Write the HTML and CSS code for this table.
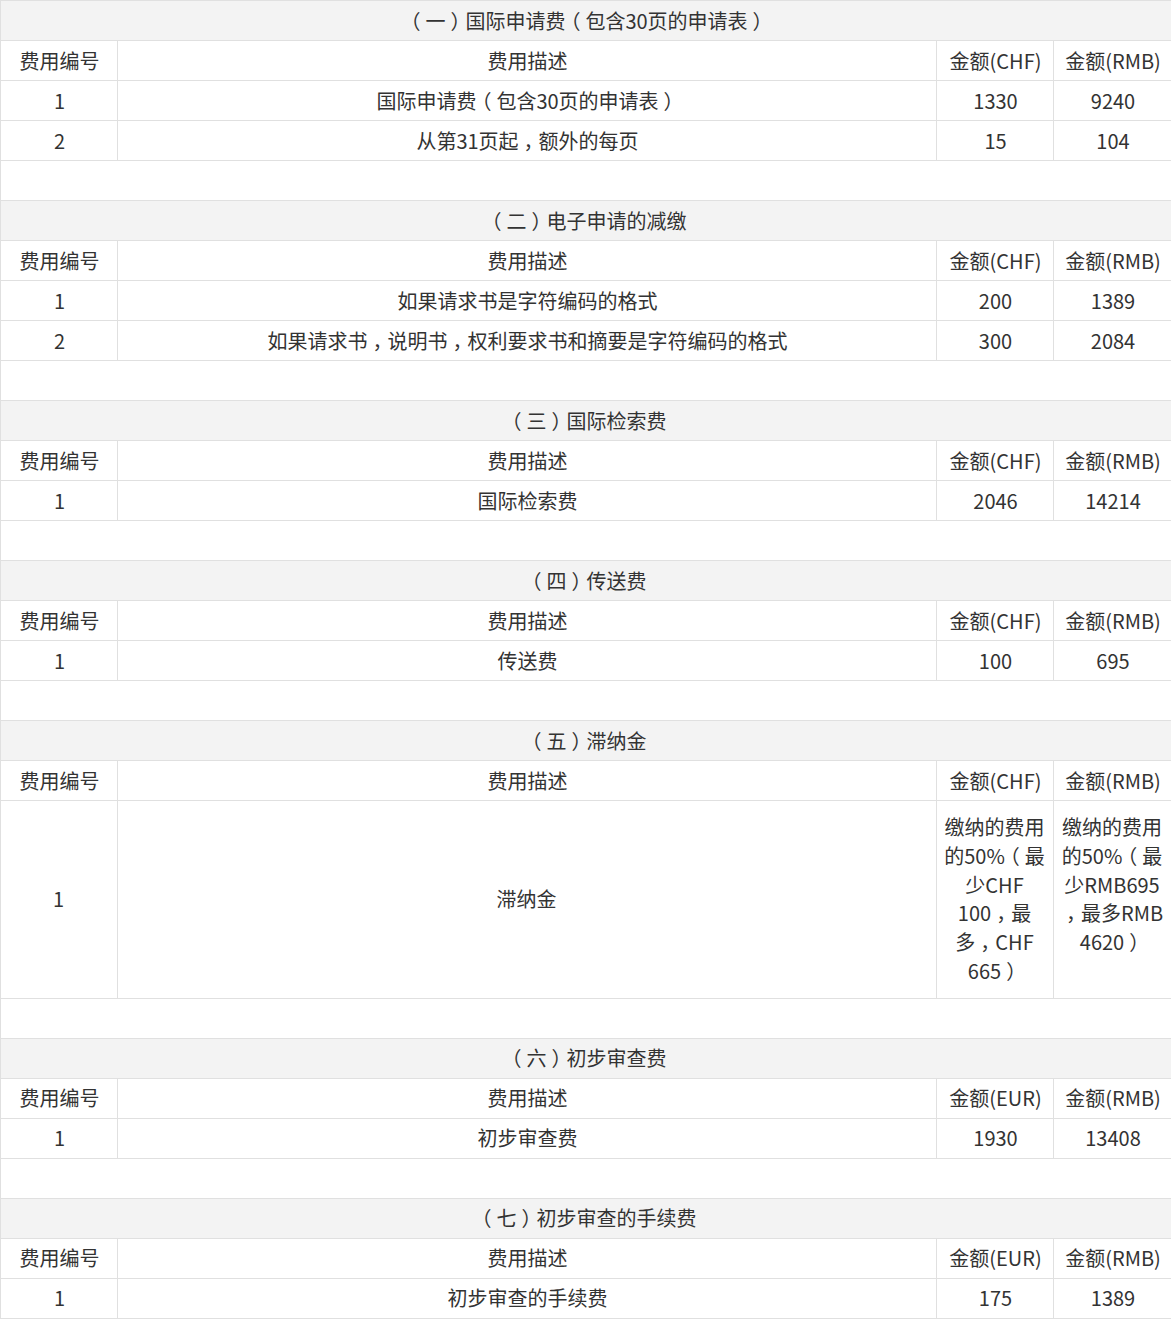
FILE: index.html
```html
<!DOCTYPE html>
<html lang="zh-CN">
<head>
<meta charset="utf-8">
<title>费用表</title>
<link rel="stylesheet" href="styles.css">
</head>
<body>
<table class="fees">
  <colgroup>
    <col class="c-no">
    <col class="c-desc">
    <col class="c-amt">
    <col class="c-amt2">
  </colgroup>
  <tbody>
    <tr class="title"><td colspan="4"><span class="p">（</span>一<span class="p">）</span>国际申请费<span class="p">（</span>包含30页的申请表<span class="p">）</span></td></tr>
    <tr><td>费用编号</td><td>费用描述</td><td>金额(CHF)</td><td>金额(RMB)</td></tr>
    <tr><td>1</td><td>国际申请费<span class="p">（</span>包含30页的申请表<span class="p">）</span></td><td>1330</td><td>9240</td></tr>
    <tr><td>2</td><td>从第31页起<span class="p">，</span>额外的每页</td><td>15</td><td>104</td></tr>
    <tr class="spacer"><td colspan="4"></td></tr>

    <tr class="title"><td colspan="4"><span class="p">（</span>二<span class="p">）</span>电子申请的减缴</td></tr>
    <tr><td>费用编号</td><td>费用描述</td><td>金额(CHF)</td><td>金额(RMB)</td></tr>
    <tr><td>1</td><td>如果请求书是字符编码的格式</td><td>200</td><td>1389</td></tr>
    <tr><td>2</td><td>如果请求书<span class="p">，</span>说明书<span class="p">，</span>权利要求书和摘要是字符编码的格式</td><td>300</td><td>2084</td></tr>
    <tr class="spacer"><td colspan="4"></td></tr>

    <tr class="title"><td colspan="4"><span class="p">（</span>三<span class="p">）</span>国际检索费</td></tr>
    <tr><td>费用编号</td><td>费用描述</td><td>金额(CHF)</td><td>金额(RMB)</td></tr>
    <tr><td>1</td><td>国际检索费</td><td>2046</td><td>14214</td></tr>
    <tr class="spacer"><td colspan="4"></td></tr>

    <tr class="title"><td colspan="4"><span class="p">（</span>四<span class="p">）</span>传送费</td></tr>
    <tr><td>费用编号</td><td>费用描述</td><td>金额(CHF)</td><td>金额(RMB)</td></tr>
    <tr><td>1</td><td>传送费</td><td>100</td><td>695</td></tr>
    <tr class="spacer"><td colspan="4"></td></tr>

    <tr class="title"><td colspan="4"><span class="p">（</span>五<span class="p">）</span>滞纳金</td></tr>
    <tr><td>费用编号</td><td>费用描述</td><td>金额(CHF)</td><td>金额(RMB)</td></tr>
    <tr class="tall"><td>1</td><td>滞纳金</td><td class="multi">缴纳的费用<br>的50%<span class="p">（</span>最<br>少CHF<br>100<span class="p">，</span>最<br>多<span class="p">，</span>CHF<br>665<span class="p">）</span></td><td class="multi">缴纳的费用<br>的50%<span class="p">（</span>最<br>少RMB695<br><span class="p">，</span>最多RMB<br>4620<span class="p">）</span></td></tr>
    <tr class="spacer"><td colspan="4"></td></tr>

    <tr class="title"><td colspan="4"><span class="p">（</span>六<span class="p">）</span>初步审查费</td></tr>
    <tr><td>费用编号</td><td>费用描述</td><td>金额(EUR)</td><td>金额(RMB)</td></tr>
    <tr><td>1</td><td>初步审查费</td><td>1930</td><td>13408</td></tr>
    <tr class="spacer"><td colspan="4"></td></tr>

    <tr class="title"><td colspan="4"><span class="p">（</span>七<span class="p">）</span>初步审查的手续费</td></tr>
    <tr><td>费用编号</td><td>费用描述</td><td>金额(EUR)</td><td>金额(RMB)</td></tr>
    <tr><td>1</td><td>初步审查的手续费</td><td>175</td><td>1389</td></tr>
  </tbody>
</table>
</body>
</html>
```

FILE: styles.css
```css
html, body {
  margin: 0;
  padding: 0;
  background: #ffffff;
}

.fees {
  width: 1171px;
  table-layout: fixed;
  border-collapse: collapse;
  font-family: "Noto Sans CJK SC", "Noto Sans", sans-serif;
  font-size: 20px;
  line-height: 28.8px;
  color: #333333;
}

.c-no { width: 117px; }
.c-desc { width: 819px; }
.c-amt { width: 117px; }
.c-amt2 { width: 118px; }

.fees td {
  border: 1px solid #e0e0e0;
  height: 38px;
  padding: 1px 8px 0 9px;
  text-align: center;
  vertical-align: middle;
}

.fees .title td {
  background: #f3f3f3;
}

.fees .tall td {
  padding: 12px 6px 12px 5px;
}

.fees .tall td.multi {
  vertical-align: top;
}

/* centre full-width punctuation inside its em box */
.p {
  font-feature-settings: "halt";
  padding: 0 0.25em;
}
```
